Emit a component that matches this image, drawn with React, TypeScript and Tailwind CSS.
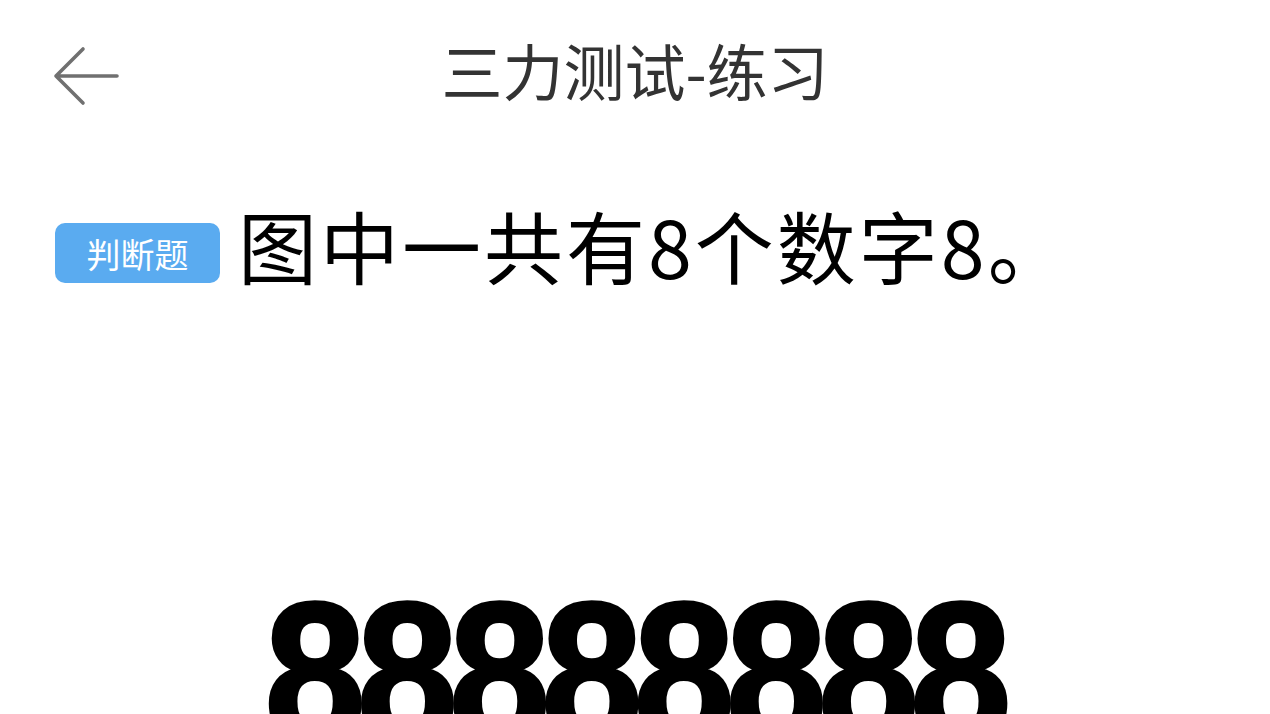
import React from 'react';

const cjk = '"Noto Sans CJK SC", "Noto Sans", sans-serif';

export default function App() {
  return (
    <div className="h-screen w-full overflow-hidden bg-white" style={{ fontFamily: cjk }}>
      {/* Header */}
      <div className="grid h-[150px] grid-cols-[1fr_auto_1fr] items-start pt-[40px]">
        <div className="pl-[53px] pt-[6px]">
          <svg width="66" height="60" viewBox="0 0 66 60" fill="none">
            <path
              d="M30 3 L3 30 L30 57 M3 30 H64"
              stroke="#707070"
              strokeWidth="3.6"
              strokeLinecap="round"
              strokeLinejoin="round"
            />
          </svg>
        </div>
        <h1 className="text-[61px] leading-[60px] text-[#333333]">三力测试-练习</h1>
        <div />
      </div>

      {/* Question */}
      <div className="flex items-end gap-[18px] pl-[55px] pt-[50px]">
        <span className="mb-[7px] flex h-[60px] w-[165px] items-center justify-center rounded-[10px] bg-[#5aabf0] text-[34px] text-white">
          判断题
        </span>
        <p className="text-[79px] leading-[90px] tracking-[3px] text-black">图中一共有8个数字8。</p>
      </div>

      {/* Figure */}
      <div className="flex justify-center pt-[292px]">
        <div
          className="ml-[-3px] origin-center scale-y-[1.1] text-[182px] font-bold leading-none tracking-[-9px] text-black [-webkit-text-stroke:3px_black]"
          style={{ fontFamily: '"Liberation Sans", Arial, sans-serif' }}
        >
          88888888
        </div>
      </div>
    </div>
  );
}
